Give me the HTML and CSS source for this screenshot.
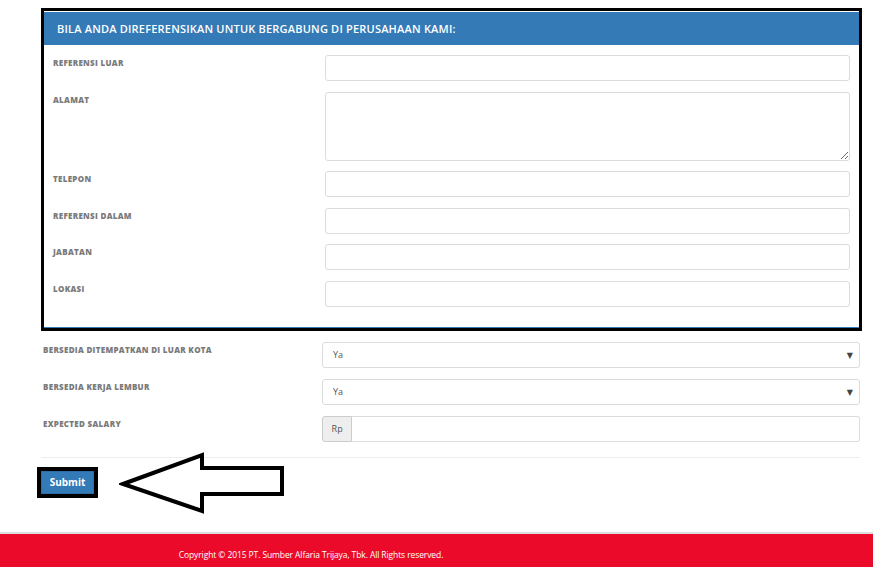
FILE: index.html
```html
<!DOCTYPE html>
<html lang="id">
<head>
  <meta charset="UTF-8" />
  <title>Form Lamaran</title>
  <link rel="stylesheet" href="styles.css">
</head>
<body>
  <div class="page">
    <div class="content">

      <div class="panel">
        <div class="panel-heading">BILA ANDA DIREFERENSIKAN UNTUK BERGABUNG DI PERUSAHAAN KAMI:</div>
        <div class="panel-body">
          <div class="row">
            <label>REFERENSI LUAR</label>
            <input type="text" />
          </div>
          <div class="row">
            <label>ALAMAT</label>
            <textarea></textarea>
          </div>
          <div class="row">
            <label>TELEPON</label>
            <input type="text" />
          </div>
          <div class="row">
            <label>REFERENSI DALAM</label>
            <input type="text" />
          </div>
          <div class="row">
            <label>JABATAN</label>
            <input type="text" />
          </div>
          <div class="row">
            <label>LOKASI</label>
            <input type="text" />
          </div>
        </div>
      </div>

      <div class="outer-rows">
        <div class="row">
          <label>BERSEDIA DITEMPATKAN DI LUAR KOTA</label>
          <div class="select-box"><span>Ya</span><span class="caret">&#9660;</span></div>
        </div>
        <div class="row">
          <label>BERSEDIA KERJA LEMBUR</label>
          <div class="select-box"><span>Ya</span><span class="caret">&#9660;</span></div>
        </div>
        <div class="row">
          <label>EXPECTED SALARY</label>
          <div class="input-group">
            <span class="addon">Rp</span>
            <input type="text" />
          </div>
        </div>
      </div>

      <hr class="divider">

      <div class="submit-row">
        <div class="submit-frame">
          <button>Submit</button>
        </div>
        <svg class="pointer" width="170" height="64" viewBox="0 0 170 64">
          <polygon points="4,32 83,3 83,16 163,16 163,42 83,42 83,59" fill="#fff" stroke="#000" stroke-width="4" stroke-linejoin="miter"/>
        </svg>
      </div>

    </div>

    <footer class="footer">
      <div class="footer-text">Copyright &copy; 2015 PT. Sumber Alfaria Trijaya, Tbk. All Rights reserved.</div>
    </footer>
  </div>
</body>
</html>
```

FILE: styles.css
```css
:root {
  --blue: #337ab7;
  --label: #7a7a7a;
  --line: #dcdcdc;
  --red: #ec0a2b;
}

* {
  box-sizing: border-box;
}

body {
  margin: 0;
  background: #fff;
  font-family: 'Open Sans', 'DejaVu Sans', sans-serif;
}

.page {
  padding-top: 8px;
}

.content {
  margin-left: 41px;
  width: 821px;
}

.panel {
  border: 3px solid #000;
  padding-top: 1px;
  background: #fff;
}

.panel-heading {
  background: var(--blue);
  color: #fff;
  height: 33px;
  line-height: 33px;
  padding: 0 13px;
  font-size: 11px;
  font-weight: 600;
  letter-spacing: 0.2px;
}

.panel-body {
  padding: 10px 9px 20px 9px;
  border-bottom: 1px solid var(--blue);
}

.row {
  display: grid;
  grid-template-columns: 272px 1fr;
  margin-bottom: 10.6px;
}

.row:last-child {
  margin-bottom: 0;
}

.row label {
  font-size: 8px;
  font-weight: 800;
  color: var(--label);
  padding-top: 2px;
  letter-spacing: 0.3px;
}

input[type="text"], textarea {
  display: block;
  width: 100%;
  height: 26px;
  border: 1px solid var(--line);
  border-radius: 3px;
  background: #fff;
  margin: 0;
  font-family: inherit;
}

textarea {
  height: 69px;
  resize: vertical;
}

.outer-rows {
  margin-top: 11px;
}

.outer-rows .row {
  grid-template-columns: 281px 1fr;
  margin-bottom: 11px;
  padding-left: 2px;
  width: 819px;
}

.outer-rows .row:last-child {
  margin-bottom: 0;
}

.outer-rows .row label {
  padding-top: 2px;
}

.select-box {
  height: 26px;
  border: 1px solid var(--line);
  border-radius: 3px;
  margin-left: -2px;
  display: flex;
  justify-content: space-between;
  align-items: center;
  padding: 0 6px 0 10px;
  font-size: 9px;
  color: #555;
}

.caret {
  font-size: 8px;
  color: #444;
}

.input-group {
  display: flex;
  margin-left: -2px;
  height: 26px;
}

.addon {
  width: 32px;
  background: #eee;
  border: 1px solid #ccc;
  border-radius: 3px 0 0 3px;
  font-size: 9px;
  color: #555;
  display: flex;
  align-items: center;
  justify-content: center;
}

.input-group input[type="text"] {
  border-left: none;
  border-radius: 0 3px 3px 0;
  height: 26px;
}

.divider {
  border: 0;
  border-top: 1px solid #eee;
  margin: 15px 0 9px 0;
  width: 819px;
}

.submit-row {
  display: flex;
  align-items: center;
  position: relative;
  margin-left: -4px;
}

.submit-frame {
  border: 4px solid #000;
  padding: 0;
}

.submit-frame button {
  display: block;
  background: var(--blue);
  border: 1px solid #2e6da4;
  color: #fff;
  font-family: 'Open Sans', sans-serif;
  font-size: 10px;
  font-weight: 700;
  width: 53px;
  height: 23px;
  padding: 0;
}

.pointer {
  position: absolute;
  left: 82px;
  top: -15px;
}

.footer {
  margin-top: 34px;
  border-top: 2px solid #ddd;
  background: var(--red);
  height: 35px;
}

.footer-text {
  width: 622px;
  text-align: center;
  color: #fff;
  font-size: 8.5px;
  padding-top: 15px;
  letter-spacing: -0.1px;
}
```
